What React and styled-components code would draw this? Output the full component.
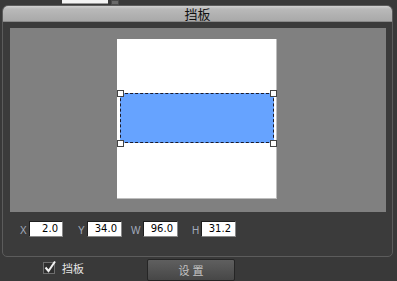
import React from "react";
import styled, { createGlobalStyle } from "styled-components";

const Global = createGlobalStyle`
  html, body { margin: 0; padding: 0; background: #393939; }
  * { box-sizing: border-box; }
`;

const Root = styled.div`
  width: 397px;
  height: 281px;
  overflow: hidden;
  background: #393939;
  font-family: "Liberation Sans", "Noto Sans CJK SC", sans-serif;
  display: flex;
  flex-direction: column;
`;

const TopStrip = styled.div`
  height: 5px;
  display: flex;
  align-items: flex-start;
  padding-left: 62px;
  gap: 3px;
`;

const TopField = styled.div`
  width: 46px;
  height: 4px;
  background: #f4f4f4;
  border-bottom: 1px solid #9a9a9a;
`;

const TopKnob = styled.div`
  width: 8px;
  height: 5px;
  background: #6a6a6a;
  border: 1px solid #4a4a4a;
`;

const Window = styled.div`
  margin-left: 2px;
  width: 391px;
  height: 254px;
  border: 1px solid #5c5c5c;
  border-radius: 6px 6px 5px 5px;
  background: #3b3b3b;
  display: flex;
  flex-direction: column;
  overflow: hidden;
`;

const TitleBar = styled.div`
  height: 16px;
  background: linear-gradient(#d0d0d0 0%, #b9b9b9 20%, #a9a9a9 100%);
  border-bottom: 1px solid #8a8a8a;
  display: flex;
  align-items: center;
  justify-content: center;
  font-family: "Noto Sans CJK SC", sans-serif;
  font-size: 13px;
  color: #111;
  line-height: 16px;
`;

const Body = styled.div`
  padding: 6px 6px 0 7px;
  display: flex;
  flex-direction: column;
`;

const Canvas = styled.div`
  width: 376px;
  height: 184px;
  background: #808080;
  padding: 11px 0 0 107px;
`;

const Paper = styled.div`
  position: relative;
  width: 160px;
  height: 160px;
  background: #fff;
  border-right: 1px solid #bdbdbd;
  border-bottom: 1px solid #bdbdbd;
`;

const Shape = styled.div`
  position: absolute;
  background: #66a3ff;
  border: 1px dashed #1a1a2a;
`;

const Handle = styled.div`
  position: absolute;
  width: 7px;
  height: 7px;
  background: #fff;
  border: 1px solid #444;
`;

const FieldRow = styled.div`
  display: flex;
  align-items: center;
  height: 16px;
  margin-top: 9px;
  padding-left: 10px;
`;

const FieldLabel = styled.span`
  width: ${p => p.$w}px;
  font-size: 10px;
  color: #a4acbd;
  padding-top: 3px;
`;

const Input = styled.div`
  width: ${p => p.$w}px;
  height: 16px;
  margin-right: ${p => p.$mr}px;
  background: #fff;
  border: 1px solid #1e1e1e;
  border-right-color: #888;
  border-bottom-color: #888;
  font-family: "DejaVu Sans", sans-serif;
  font-size: 10px;
  color: #000;
  text-align: right;
  padding-right: 4px;
  line-height: 14px;
`;

const BottomRow = styled.div`
  display: flex;
  align-items: flex-start;
  margin-top: 2px;
  padding-left: 43px;
`;

const CheckWrap = styled.div`
  display: flex;
  align-items: center;
  height: 14px;
  margin-top: 2px;
  width: 104px;
`;

const CheckBox = styled.div`
  width: 12px;
  height: 12px;
  background: #2e2e2e;
  border: 1px solid #6e6e6e;
  position: relative;
  margin-right: 7px;
`;

const CheckLabel = styled.span`
  font-family: "Noto Sans CJK SC", sans-serif;
  font-size: 11px;
  color: #e6e6e6;
`;

const Button = styled.div`
  width: 88px;
  height: 22px;
  background: linear-gradient(#5f5f5f, #474747);
  border: 1px solid #252525;
  border-radius: 2px;
  display: flex;
  justify-content: center;
  padding-top: 2px;
  padding-left: 3px;
  font-family: "Noto Sans CJK SC", sans-serif;
  font-size: 11px;
  color: #c4c4c4;
  letter-spacing: 3px;
`;

const SCALE = 1.6;
const rect = { x: 2.0, y: 34.0, w: 96.0, h: 31.2 };

export default function App() {
  const left = rect.x * SCALE;
  const top = rect.y * SCALE;
  const w = rect.w * SCALE;
  const h = rect.h * SCALE;
  const corners = [
    [left, top],
    [left + w, top],
    [left, top + h],
    [left + w, top + h],
  ];
  return (
    <Root>
      <Global />
      <TopStrip>
        <TopField />
        <TopKnob />
      </TopStrip>
      <Window>
        <TitleBar>挡板</TitleBar>
        <Body>
          <Canvas>
            <Paper>
              <Shape style={{ left, top, width: w, height: h }} />
              {corners.map(([cx, cy], i) => (
                <Handle key={i} style={{ left: cx - 3.5, top: cy - 3.5 }} />
              ))}
            </Paper>
          </Canvas>
          <FieldRow>
            <FieldLabel $w={9}>X</FieldLabel>
            <Input $w={34} $mr={15}>2.0</Input>
            <FieldLabel $w={9}>Y</FieldLabel>
            <Input $w={35} $mr={9}>34.0</Input>
            <FieldLabel $w={12}>W</FieldLabel>
            <Input $w={35} $mr={14}>96.0</Input>
            <FieldLabel $w={9}>H</FieldLabel>
            <Input $w={35} $mr={0}>31.2</Input>
          </FieldRow>
        </Body>
      </Window>
      <BottomRow>
        <CheckWrap>
          <CheckBox>
            <svg width="14" height="14" viewBox="0 0 14 14" style={{ position: "absolute", left: -1, top: -3 }}>
              <path d="M2.5 7.5 L5.5 11 L12 1.5" fill="none" stroke="#f2f2f2" strokeWidth="2" />
            </svg>
          </CheckBox>
          <CheckLabel>挡板</CheckLabel>
        </CheckWrap>
        <Button>设置</Button>
      </BottomRow>
    </Root>
  );
}
